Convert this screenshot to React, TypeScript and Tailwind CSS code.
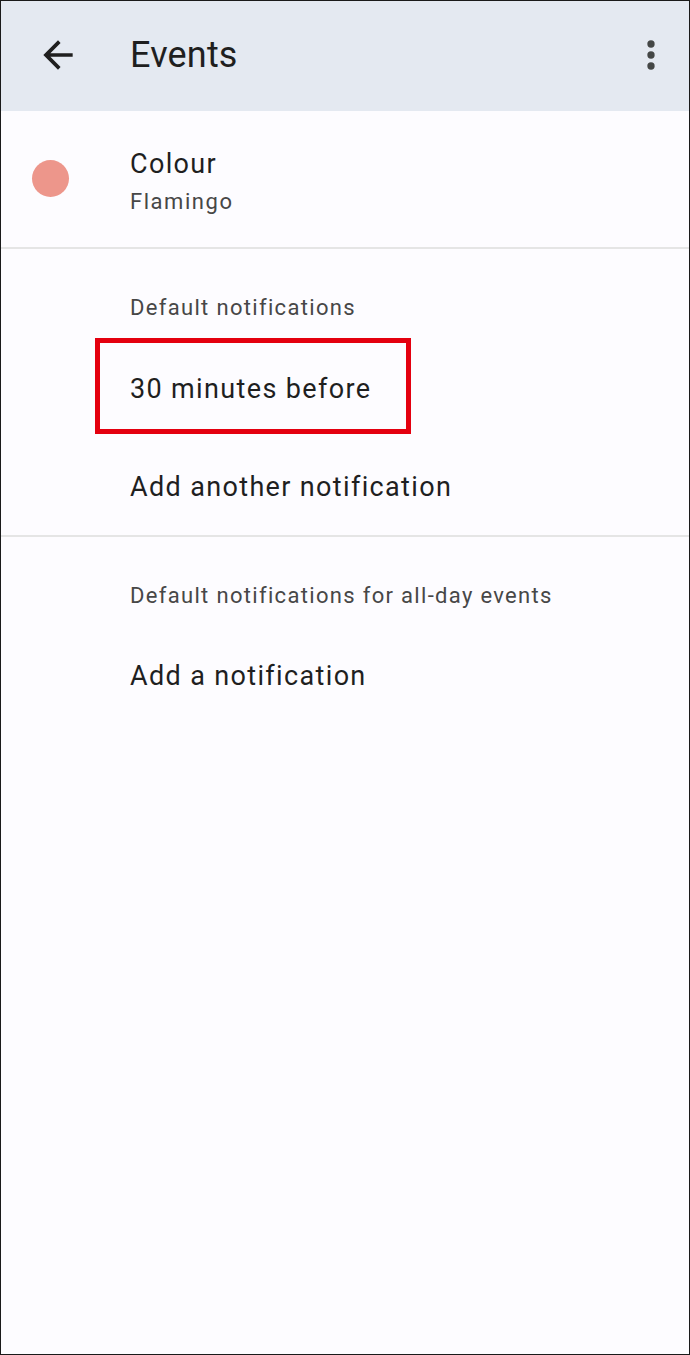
import React from 'react';

const font = { fontFamily: 'Roboto, "Noto Sans", sans-serif' };

const BackArrow = () => (
  <svg width="44" height="44" viewBox="0 0 24 24" fill="#1f1f1f">
    <path d="M20 11H7.83l5.59-5.59L12 4l-8 8 8 8 1.41-1.41L7.83 13H20v-2z" />
  </svg>
);

const MoreVert = () => (
  <svg width="44" height="44" viewBox="0 0 24 24" fill="#444746">
    <circle cx="12" cy="6" r="2" />
    <circle cx="12" cy="12" r="2" />
    <circle cx="12" cy="18" r="2" />
  </svg>
);

export default function App() {
  return (
    <div
      className="w-[690px] h-[1355px] border border-[#1a1a1a] bg-[#fdfcff] flex flex-col overflow-hidden"
      style={font}
    >
      {/* Top app bar */}
      <div className="h-[110px] shrink-0 bg-[#e4e9f1] flex items-center pb-[2px]">
        <div className="ml-[35px] w-[44px] h-[44px] flex items-center justify-center">
          <BackArrow />
        </div>
        <h1 className="ml-[50px] text-[36px] leading-[44px] tracking-[0.005em] text-[#1f1f1f] font-normal">Events</h1>
        <div className="ml-auto mr-[16px] w-[44px] h-[44px] flex items-center justify-center">
          <MoreVert />
        </div>
      </div>

      {/* Colour row */}
      <div className="flex items-start pt-[35px] pb-[27px]">
        <div className="ml-[31px] mt-[14px] w-[37px] h-[37px] rounded-full bg-[#ed968b] shrink-0" />
        <div className="ml-[61px] flex flex-col">
          <span className="text-[27px] leading-[37px] tracking-[0.05em] text-[#1f1f1f]">Colour</span>
          <span className="text-[22px] leading-[37px] tracking-[0.07em] text-[#474747]">Flamingo</span>
        </div>
      </div>

      <div className="h-[2px] bg-[#e5e5e5]" />

      {/* Default notifications */}
      <div className="flex flex-col pl-[129px]">
        <span className="mt-[44px] text-[22px] leading-[30px] tracking-[0.06em] text-[#474747]">
          Default notifications
        </span>
        <div className="relative mt-[42px]">
          <span className="block text-[27px] leading-[48px] tracking-[0.05em] text-[#1f1f1f]">
            30 minutes before
          </span>
          <div className="absolute left-[-35px] top-[-27px] w-[316px] h-[96px] border-[5px] border-[#e4000f]" />
        </div>
        <span className="mt-[50px] text-[27px] leading-[48px] tracking-[0.05em] text-[#1f1f1f]">
          Add another notification
        </span>
      </div>

      <div className="mt-[24px] h-[2px] bg-[#e5e5e5]" />

      {/* All-day events */}
      <div className="flex flex-col pl-[129px]">
        <span className="mt-[44px] text-[22px] leading-[30px] tracking-[0.06em] text-[#474747]">
          Default notifications for all-day events
        </span>
        <span className="mt-[41px] text-[27px] leading-[48px] tracking-[0.05em] text-[#1f1f1f]">
          Add a notification
        </span>
      </div>
    </div>
  );
}
